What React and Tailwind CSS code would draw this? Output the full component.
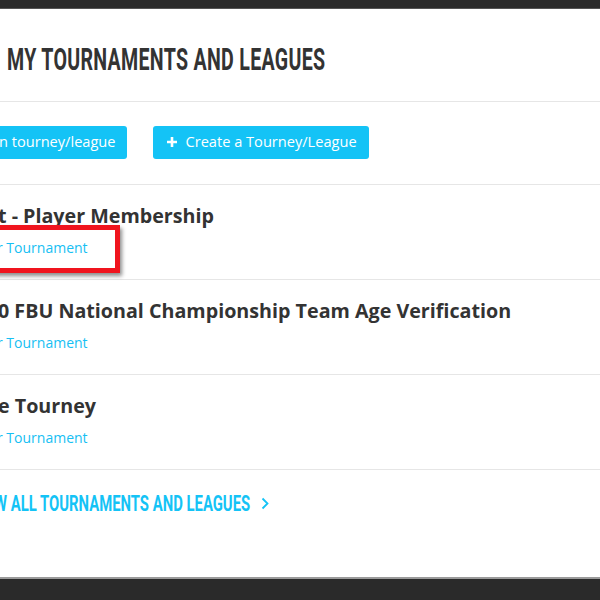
import React from 'react';

const ROWS = [
  { title: "t - Player Membership", sub: "r Tournament", boxed: true },
  { title: "0 FBU National Championship Team Age Verification", sub: "r Tournament" },
  { title: "e Tourney", sub: "r Tournament" },
];

function PlusIcon() {
  return (
    <svg width="12" height="12" viewBox="0 0 12 12" className="shrink-0">
      <path d="M6 1v10M1 6h10" stroke="white" strokeWidth="2.6" />
    </svg>
  );
}

export default function App() {
  const body = { fontFamily: '"Open Sans", "Noto Sans", sans-serif' };
  const display = { fontFamily: 'Roboto, "Liberation Sans", sans-serif' };

  return (
    <div className="w-[600px] h-[600px] bg-[#262626] flex flex-col overflow-hidden" style={body}>
      <div className="h-[9px] bg-[#2b2b2b] border-b border-[#555]" />
      <div className="flex-1 bg-white flex flex-col overflow-hidden">
        {/* heading */}
        <div className="h-[93px] border-b border-[#e6e6e6] flex items-center pl-[7px] pt-[7px]">
          <h1
            className="text-[32px] font-bold text-[#333] uppercase origin-left scale-x-[0.612] whitespace-nowrap leading-none tracking-[0.5px]"
            style={display}
          >
            My Tournaments and Leagues
          </h1>
        </div>

        {/* buttons */}
        <div className="h-[83px] border-b border-[#e6e6e6] flex items-center gap-[26px] pb-[2px]">
          <button className="h-[33px] bg-[#14c3f6] text-white text-[14.6px] rounded-r-[3px] pr-[11px] whitespace-nowrap">
            <span className="-ml-[1px]">n tourney/league</span>
          </button>
          <button className="h-[33px] bg-[#14c3f6] text-white text-[14.6px] rounded-[3px] pl-[13px] pr-[12px] flex items-center gap-[8px] whitespace-nowrap">
            <PlusIcon />
            Create a Tourney/League
          </button>
        </div>

        {/* rows */}
        {ROWS.map((r, i) => (
          <div key={i} className="h-[95px] border-b border-[#e6e6e6] flex flex-col pt-[17px] relative">
            <div className="text-[19.7px] font-bold text-[#333] leading-[28px] whitespace-nowrap -ml-[2px]">
              {r.title}
            </div>
            <div className="text-[14px] text-[#16c0f3] leading-[20px] mt-[8px] whitespace-nowrap -ml-[3px]">
              {r.sub}
            </div>
            {r.boxed && (
              <div className="absolute left-[-10px] top-[40px] w-[130px] h-[48px] border-[5px] border-[#f0141e] shadow-[2px_3px_4px_rgba(0,0,0,0.45)]" />
            )}
          </div>
        ))}

        {/* view all */}
        <div className="flex items-center pt-[21px] text-[#14c3f6]">
          <span
            className="w-[252px] shrink-0 text-[22px] font-bold uppercase whitespace-nowrap leading-none -ml-[6px]"
          >
            <span className="inline-block origin-left scale-x-[0.675]" style={display}>
              w All Tournaments and Leagues
            </span>
          </span>
          <svg width="8" height="13" viewBox="0 0 8 13" className="ml-[15px]">
            <path d="M1.5 1.5l5 5-5 5" fill="none" stroke="#14c3f6" strokeWidth="1.8" />
          </svg>
        </div>
      </div>
      <div className="h-[23px] bg-[#2a2a2a] border-t-2 border-[#9a9a9a]" />
    </div>
  );
}
